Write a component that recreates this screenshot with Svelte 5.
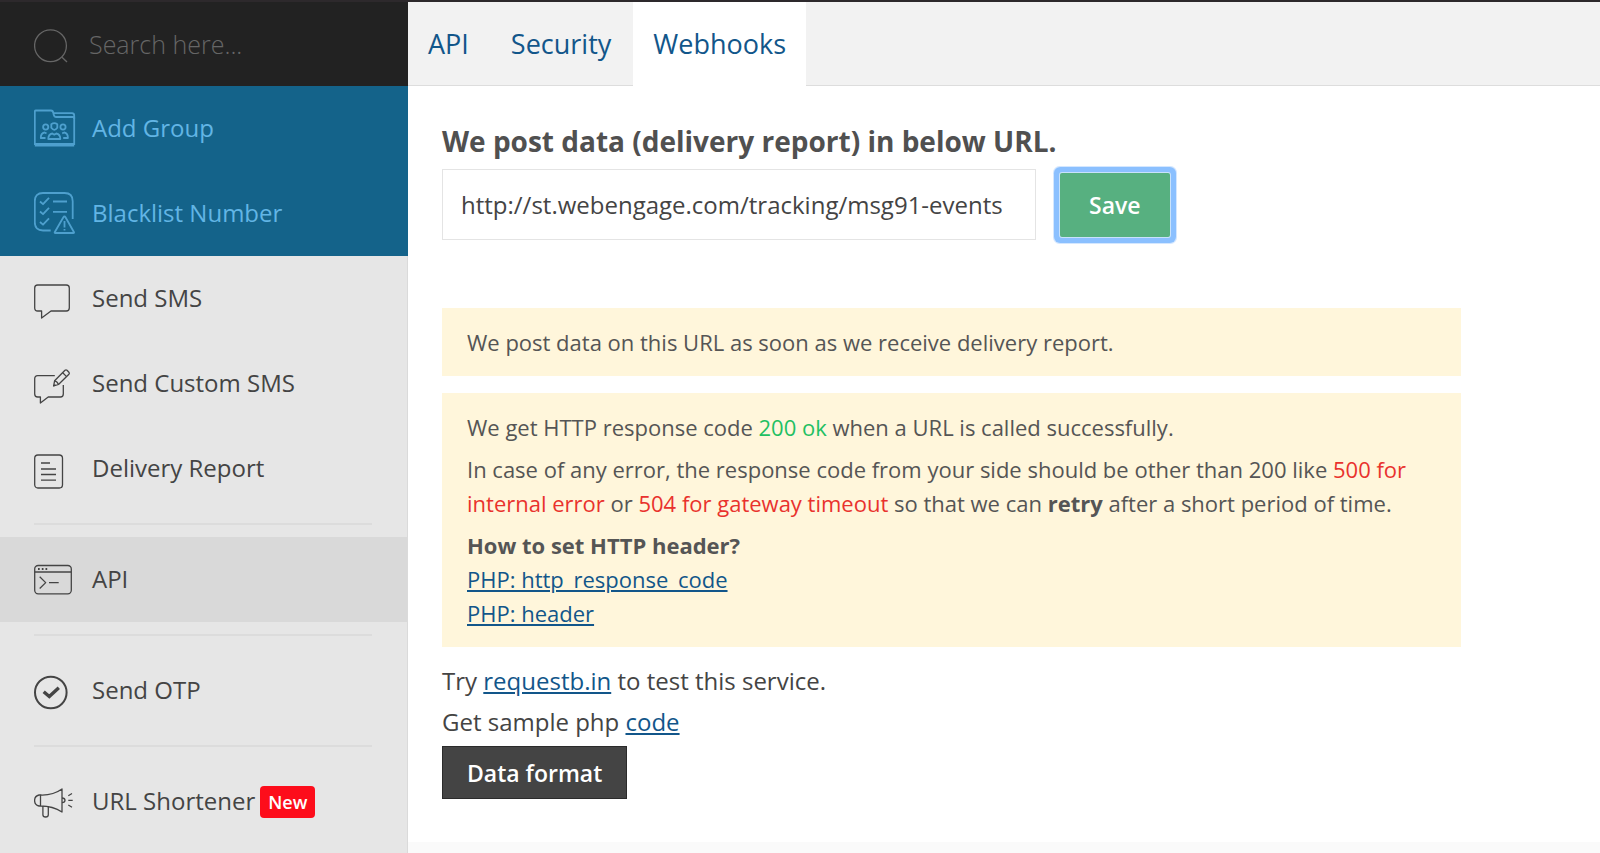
<script lang="ts">
	type Item = { label: string; icon: string; badge?: string };

	const quick: Item[] = [
		{ label: "Add Group", icon: "group" },
		{ label: "Blacklist Number", icon: "blacklist" },
	];

	const sections: Item[][] = [
		[
			{ label: "Send SMS", icon: "sms" },
			{ label: "Send Custom SMS", icon: "custom" },
			{ label: "Delivery Report", icon: "report" },
		],
		[{ label: "API", icon: "api" }],
		[{ label: "Send OTP", icon: "otp" }],
		[{ label: "URL Shortener", icon: "horn", badge: "New" }],
	];

	const tabs = ["API", "Security", "Webhooks"];

	let active = $state("API");
	let tab = $state("Webhooks");
	let query = $state("");
	let url = $state("http://st.webengage.com/tracking/msg91-events");
</script>

{#snippet icon(name: string)}
	<svg class="icon" viewBox="0 0 44 44" width="44" height="44" aria-hidden="true">
		{#if name === "group"}
			<path d="M.8 38V4.6q0-1.1 1.100-1.100H17q2 0 2.400 2.600.3 3.900 3 3.900H40.200V38" />
			<path d="M20 6.200H38q2.200 0 2.200 2.400V12" />
			<path d="M.8 36.800H40.200M.8 38.700H40.200" />
			<path d="M17.300 17.200q3-2 6 0v3.600q-3 4-6 0z" />
			<path d="M14.300 32q0-4.800 4-5.500l2 1.200 2-1.200q4 .7 4 5.500z" />
			<circle cx="11.700" cy="20" r="2.600" />
			<circle cx="29" cy="20" r="2.600" />
			<path d="M11.500 31H6.800q0-5 3.700-5.500l2 .8M29.200 31h4.700q0-5-3.700-5.500l-2 .8" />
		{:else if name === "blacklist"}
			<path d="M16.700 38.500H9q-8.200 0-8.200-8.200V9.200Q.8 1 9 1h21.500q8.200 0 8.200 8.200V27" />
			<path d="M6 9.500l3 2.700 6-6.400M6 19.500l3 2.700 6-6.400M6 30l3 2.700 6-6.400" />
			<path d="M19 9.500h14M19 19.800h14" />
			<path d="M30.500 24.500q.6 0 1 .8l8.500 15q.2.700-.6.700H21.200q-.8 0-.5-.8l8.700-14.900q.4-.8 1.100-.8z" />
			<path d="M30.500 29v6.500M30.500 37v1.500" />
		{:else if name === "sms"}
			<path d="M3.700 8H32.300q3 0 3 3V31q0 3-3 3H17L7.600 41V34H3.700q-3 0-3-3V11q0-3 3-3z" />
		{:else if name === "custom"}
			<path d="M20.800 13.700H3.700q-3 0-3 3V32q0 3 3 3H6.400V41L14.200 35H26.500q2.800 0 2.800-3V23" />
			<path d="M19.600 24l1-5.200L31 8.300q1-.9 2 0l1.900 1.900q.9 1 0 2L24.500 22.500z" />
			<path d="M20.600 18.800q2.600.4 3.900 3.700M28.700 10.700l3.900 3.900M19.600 24l1.800-1.600" />
		{:else if name === "report"}
			<rect x=".7" y="8" width="27.800" height="33" rx="3.200" />
			<path d="M7 16h9M7 22h15M7 27.500h15M7 33.200h15" />
		{:else if name === "api"}
			<rect x=".7" y="7.500" width="36.600" height="28.300" rx="3.500" />
			<path d="M.7 14H37.300" />
			<path d="M5.700 18.700l6 5.900-6 5.900M15 24.600h9.700" />
			<path class="dots" d="M4 11h1.700M7.800 11h1.700M11.500 11h1.700" />
		{:else if name === "otp"}
			<circle class="ring" cx="16.800" cy="23.500" r="15.800" />
			<path class="tick" d="M9.700 22.700l5.600 4.800 9.500-8.800" />
		{:else if name === "horn"}
			<path d="M6.500 15H5Q.6 16 .6 20.500T5 26h1.500zM6.500 15Q19 15.500 28 9V32Q19 26 6.500 26" />
			<path d="M8.900 26v8.700q0 2.300 2.700 2.300t2.700-2.300V26.500" />
			<path d="M28 18q3 0 3 2.300t-3 2.300M34.300 15.700l3.700-2.200M34.300 20.300h4.400M34.300 25l3.700 2.200" />
		{:else if name === "search"}
			<circle cx="16.500" cy="23.700" r="15.900" />
			<path d="M28 35.200l5 4.800" />
		{/if}
	</svg>
{/snippet}

{#snippet navItem(item: Item)}
	<a
		href="#{item.icon}"
		class="nav-item"
		class:active={active === item.label}
		onclick={() => (active = item.label)}
	>
		{@render icon(item.icon)}
		<span class="label">{item.label}</span>
		{#if item.badge}
			<span class="badge">{item.badge}</span>
		{/if}
	</a>
{/snippet}

<div class="app">
	<aside class="sidebar">
		<label class="search">
			{@render icon("search")}
			<input type="search" placeholder="Search here..." aria-label="Search" bind:value={query} />
		</label>
		<nav class="quick">
			{#each quick as item}
				{@render navItem(item)}
			{/each}
		</nav>
		<nav>
			{#each sections as items, i}
				{#if i > 0}
					<hr />
				{/if}
				{#each items as item}
					{@render navItem(item)}
				{/each}
			{/each}
		</nav>
	</aside>

	<div class="page">
		<nav class="tabs">
			{#each tabs as name}
				<a href="#{name.toLowerCase()}" class:current={tab === name} onclick={() => (tab = name)}>
					{name}
				</a>
			{/each}
		</nav>

		<main>
			<form onsubmit={(e) => e.preventDefault()}>
				<label class="title" for="webhook-url">We post data (delivery report) in below URL.</label>
				<div class="row">
					<input id="webhook-url" type="text" bind:value={url} />
					<button type="submit" class="save">Save</button>
				</div>
			</form>

			<div class="note">
				<p>We post data on this URL as soon as we receive delivery report.</p>
			</div>

			<div class="note">
				<p>
					We get HTTP response code <span class="ok">200 ok</span> when a URL is called successfully.
				</p>
				<p>
					In case of any error, the response code from your side should be other than 200 like
					<span class="error">500 for internal error</span> or
					<span class="error">504 for gateway timeout</span> so that we can <b>retry</b> after a
					short period of time.
				</p>
				<div>
					<b>How to set HTTP header?</b><br />
					<a href="#http_response_code">PHP: http_response_code</a><br />
					<a href="#header">PHP: header</a>
				</div>
			</div>

			<div class="help">
				<p>Try <a href="#requestbin">requestb.in</a> to test this service.</p>
				<p>Get sample php <a href="#code">code</a></p>
				<button type="button" class="format">Data format</button>
			</div>
		</main>
	</div>
</div>

<style>
	:global(body) {
		background: #fafafa;
	}

	.app {
		display: flex;
		min-height: 100vh;
		box-sizing: border-box;
		border-top: 2px solid #2d292c;
		color: #444;
		font-family: "Open Sans", "Noto Sans", sans-serif;
		font-size: 24px;
		line-height: 34px;
	}

	.app :global(*) {
		box-sizing: border-box;
	}

	input,
	button {
		font: inherit;
	}

	a {
		color: #12568a;
	}

	p {
		margin: 0;
	}

	.sidebar {
		flex: none;
		width: 408px;
		border-right: 1px solid #dadada;
		background: #e6e6e6;
	}

	.icon {
		flex: none;
		margin-right: 14px;
		fill: none;
		stroke: currentColor;
		stroke-width: 1.3;
		stroke-linejoin: round;
	}

	.icon .dots,
	.icon .ring {
		stroke-width: 2;
	}

	.icon .tick {
		stroke-width: 3.4;
		stroke-linejoin: miter;
	}

	.search {
		display: flex;
		align-items: center;
		height: 84px;
		margin-right: -1px;
		padding-left: 34px;
		background: #222;
		color: #666;
	}

	.search .icon {
		margin-right: 11px;
	}

	.search input {
		flex: 1;
		min-width: 0;
		padding: 0;
		border: 0;
		outline: 0;
		background: none;
		color: #999;
		font-size: 25px;
		font-weight: 300;
	}

	.search input::placeholder {
		color: #666;
		opacity: 1;
	}

	.quick {
		margin-right: -1px;
		background: #14638a;
	}

	.nav-item {
		display: flex;
		align-items: center;
		height: 85px;
		padding-left: 34px;
		color: #444;
		text-decoration: none;
	}

	.label {
		padding-bottom: 2px;
	}

	.quick .nav-item {
		color: #62b5e5;
	}

	.quick .icon {
		opacity: 0.75;
		stroke-width: 1.8;
	}

	.nav-item.active {
		background: #d9d9d9;
	}

	.badge {
		margin-left: 5px;
		padding: 0 8px;
		border-radius: 4px;
		background: #fd0d1b;
		color: #fff;
		font-size: 18px;
		font-weight: 600;
		line-height: 32px;
	}

	hr {
		height: 2px;
		margin: 12px 35px 12px 34px;
		border: 0;
		background: #dcdcdc;
	}

	.page {
		flex: 1;
		min-width: 0;
	}

	.tabs {
		display: flex;
		gap: 2px;
		height: 84px;
		background: #f2f2f2;
		box-shadow: inset 0 -1px #ddd;
	}

	.tabs a {
		display: flex;
		align-items: center;
		padding: 0 20px;
		font-size: 27px;
		text-decoration: none;
	}

	.tabs .current {
		background: #fff;
	}

	main {
		padding: 35px 34px 43px;
		background: #fff;
	}

	form {
		margin-bottom: 68px;
	}

	.title {
		display: block;
		margin-bottom: 8px;
		color: #505050;
		font-size: 28px;
		font-weight: 700;
		line-height: 40px;
	}

	.row {
		display: flex;
		align-items: center;
		gap: 24px;
	}

	.row input {
		width: 594px;
		height: 71px;
		padding: 0 18px;
		border: 1px solid #e4e4e4;
		background: #fff;
		color: #444;
	}

	.save {
		height: 64px;
		padding: 0 29px;
		border: 0;
		border-radius: 2px;
		background: #57b080;
		box-shadow: 0 0 0 1px #c9e2fb, 0 0 0 6px #8bc0ff, 0 0 0 7px #d4e7ff;
		color: #fff;
		font-size: 23px;
		font-weight: 600;
	}

	.note {
		display: flex;
		flex-direction: column;
		gap: 8px;
		max-width: 1019px;
		margin-bottom: 17px;
		padding: 17px 25px;
		background: #fff6db;
		color: #555;
		font-size: 22px;
	}

	.ok {
		color: #1fc063;
	}

	.error {
		color: #e9322d;
	}

	.help {
		display: flex;
		flex-direction: column;
		align-items: flex-start;
		gap: 7px;
	}

	.format {
		height: 53px;
		padding: 0 24px;
		border: 1px solid #2b2b2b;
		background: #444;
		color: #fff;
		font-size: 23px;
		font-weight: 600;
	}
</style>
